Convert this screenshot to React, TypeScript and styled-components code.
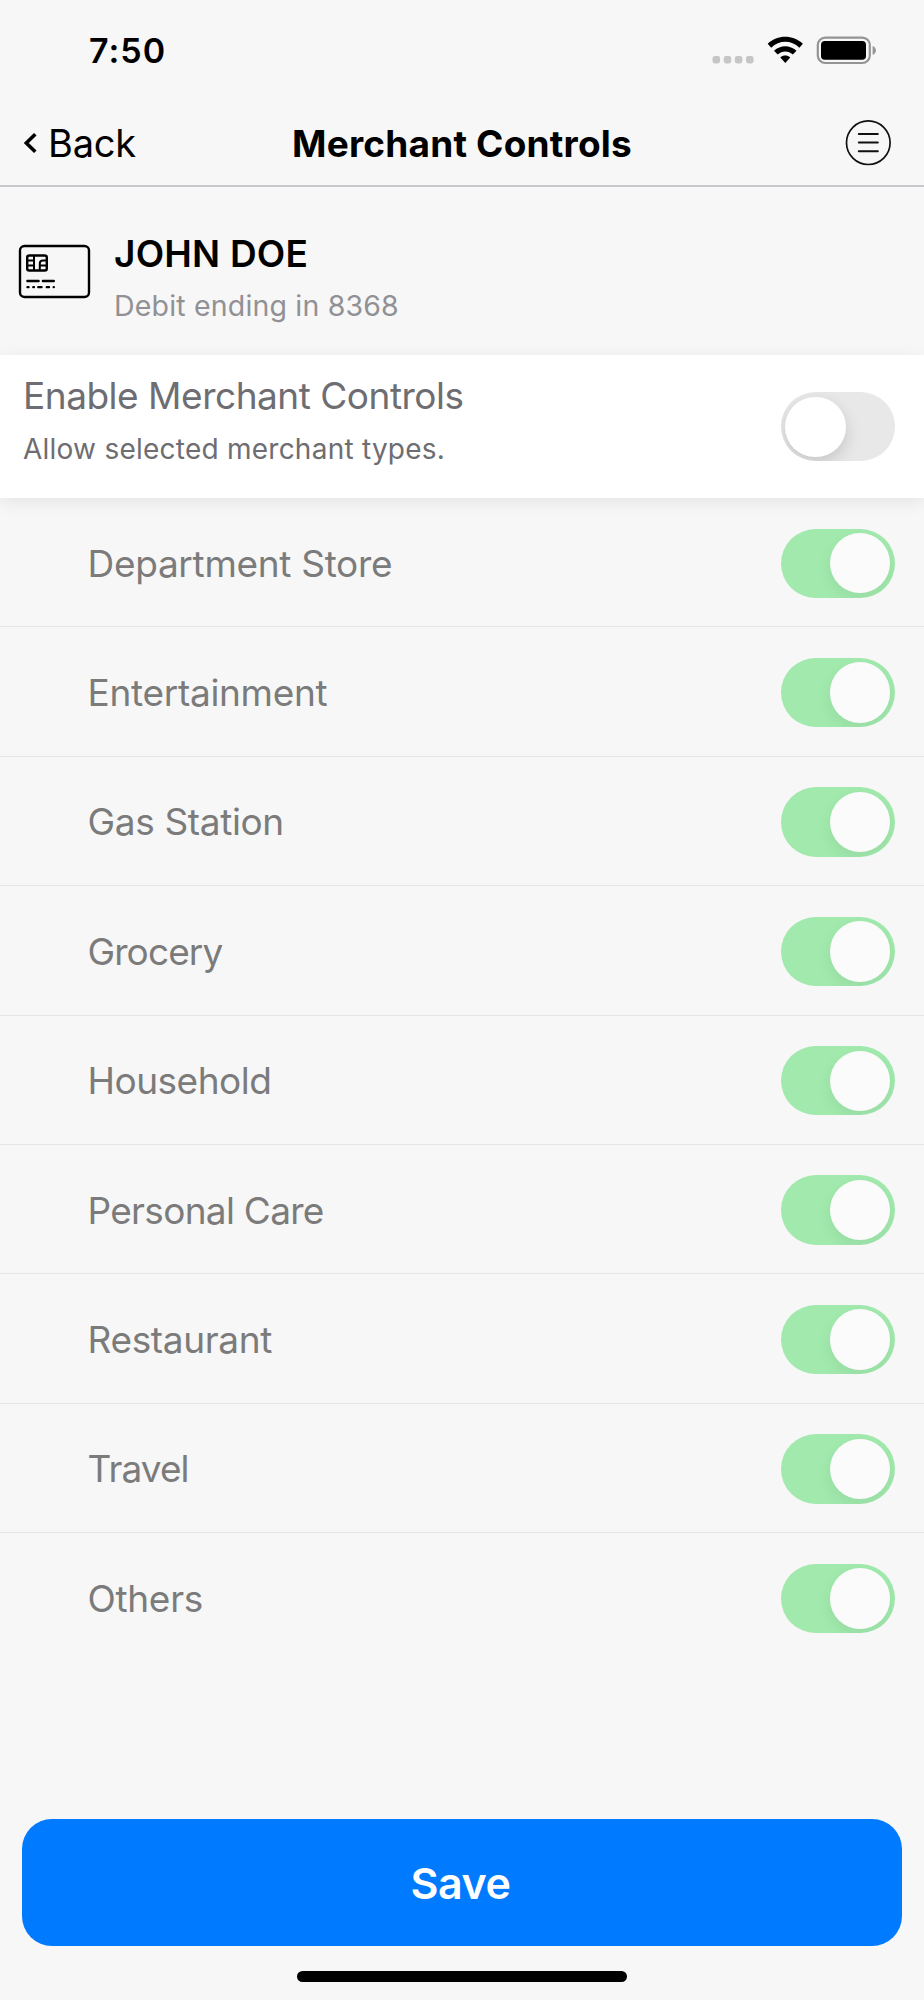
import React from "react";
import styled, { createGlobalStyle } from "styled-components";

const GlobalStyle = createGlobalStyle`
  * { box-sizing: border-box; }
  body { margin: 0; background: #f7f7f7; font-family: Inter, "Liberation Sans", sans-serif; }
  button { font: inherit; border: 0; padding: 0; background: none; color: inherit; }
  h1, h2, p { margin: 0; font-weight: inherit; }
  svg { display: block; flex: none; }
`;

const Screen = styled.div`
  width: 924px;
  height: 2000px;
  display: flex;
  flex-direction: column;
  background: #f7f7f7;
  color: #000;
  overflow: hidden;
`;

const Text = styled.span<{ $size: number; $line: number; $spacing?: number; $weight?: number; $color?: string }>`
  display: block;
  white-space: nowrap;
  font-size: ${(p) => p.$size}px;
  line-height: ${(p) => p.$line}px;
  letter-spacing: ${(p) => p.$spacing ?? 0}px;
  font-weight: ${(p) => p.$weight ?? 400};
  color: ${(p) => p.$color ?? "inherit"};
`;

const StatusBar = styled.div`
  height: 100px;
  flex: none;
  display: flex;
  justify-content: space-between;
  padding: 31px 48px 0 89px;
`;

const StatusIcons = styled.div`
  display: flex;
  padding-top: 5px;
`;

const NavBar = styled.header`
  height: 87px;
  flex: none;
  display: grid;
  grid-template-columns: 1fr auto 1fr;
  padding: 19px 24px 0;
  border-bottom: 2px solid #c9c9cd;
`;

const BackButton = styled.button`
  display: flex;
  align-items: flex-start;
  gap: 11px;
  justify-self: start;
  height: 50px;
`;

const MenuButton = styled.button`
  justify-self: end;
  align-self: start;
  margin-right: 8px;
`;

const Chevron = styled.svg`
  margin-top: 14px;
`;

const Account = styled.section`
  height: 168px;
  flex: none;
  display: flex;
  gap: 22px;
  padding: 46px 0 0 18px;
`;

const CardIcon = styled.svg`
  margin-top: 11px;
`;

const EnablePanel = styled.section`
  position: relative;
  height: 143px;
  flex: none;
  display: flex;
  justify-content: space-between;
  padding: 21px 29px 0 23px;
  background: #fff;
  box-shadow: 0 4px 16px rgba(0, 0, 0, 0.08);
`;

const PanelToggle = styled.div`
  padding-top: 16px;
`;

const List = styled.ul`
  list-style: none;
  margin: 0;
  padding: 0;
  flex: none;
`;

const Row = styled.li`
  height: 129.4px;
  display: flex;
  align-items: center;
  justify-content: space-between;
  padding: 2px 29px 0 87.5px;
  border-bottom: 1px solid #e5e5e5;
  &:last-child { border-bottom-color: transparent; }
`;

const RowLabel = styled(Text)`
  padding-top: 1px;
`;

const Track = styled.button<{ $on: boolean }>`
  display: flex;
  align-items: center;
  justify-content: ${(p) => (p.$on ? "flex-end" : "flex-start")};
  width: 114px;
  height: 69.4px;
  padding: 0 4.6px 0 4.2px;
  border-radius: 35px;
  overflow: hidden;
  background: ${(p) => (p.$on ? "#a1e9ad" : "#e8e8e8")};
`;

const Knob = styled.span<{ $on: boolean }>`
  width: 60.4px;
  height: 60.4px;
  border-radius: 50%;
  background: ${(p) => (p.$on ? "#fbfbfb" : "#fff")};
  box-shadow: 0 6px 16px rgba(0, 0, 0, ${(p) => (p.$on ? 0.06 : 0.15)});
`;

const Footer = styled.footer`
  margin-top: auto;
  height: 181px;
  flex: none;
  display: flex;
  flex-direction: column;
  align-items: center;
  padding: 0 22.4px;
`;

const SaveButton = styled.button`
  width: 100%;
  height: 127px;
  border-radius: 30px;
  background: #007aff;
  color: #fff;
  display: flex;
  justify-content: center;
  padding: 34px 3px 0 0;
`;

const HomeIndicator = styled.div`
  margin-top: 25px;
  width: 330px;
  height: 11px;
  border-radius: 6px;
  background: #000;
`;

function Toggle({ on, label }: { on: boolean; label: string }) {
  return (
    <Track $on={on} role="switch" aria-checked={on} aria-label={label}>
      <Knob $on={on} />
    </Track>
  );
}

function Signals() {
  return (
    <svg width="164" height="30" viewBox="712 36 164 30">
      <g fill="#c6c6c6">
        {[712.5, 723.7, 734.8, 746].map((x) => (
          <rect key={x} x={x} y="56" width="7.6" height="7.4" rx="2.4" />
        ))}
      </g>
      <path d="M767.7 43.7C777.5 34.4 792.8 34.4 802.9 43.7L799.4 47.7C791 39.8 779.5 39.8 771.2 47.7Z" />
      <path d="M774 50.7C780.5 44.6 789.9 44.6 796.5 50.7L792.8 54.5C788.3 50.6 782.2 50.6 777.7 54.5Z" />
      <path d="M780.3 57.5C783.2 54.9 787.3 54.9 790.2 57.5L785.3 63.1Z" />
      <rect x="817.8" y="37.6" width="52" height="25.4" rx="7.5" fill="none" stroke="#949494" strokeWidth="2.2" />
      <rect x="821" y="41" width="45" height="18.7" rx="3.8" />
      <path d="M872.6 46C877 47.5 877 53.3 872.6 54.8Z" fill="#949494" />
    </svg>
  );
}

function PaymentCard() {
  return (
    <CardIcon width="74" height="55" viewBox="18 244 74 55" fill="none" stroke="#000" strokeWidth="2.4">
      <rect x="20" y="246" width="69" height="51" rx="4.5" />
      <rect x="27.2" y="255.5" width="19.6" height="15" rx="2" />
      <path d="M34 255.5V270.5M27 260.4H34M27 265.6H34M39.8 270.5V263.4Q39.8 260.4 43 260.4H47M40 265.6H47" strokeWidth="2" />
      <path d="M27.4 281H38.6M42.9 281H53.8" strokeLinecap="round" />
      <path d="M27.4 287.2H28.6M33.2 287.2H34M38.2 287.2H41.6M46.7 287.2H49.1M53.6 287.2H53.9" strokeLinecap="round" strokeWidth="2.2" />
    </CardIcon>
  );
}

const merchants: { name: string; spacing: number }[] = [
  { name: "Department Store", spacing: -0.3 },
  { name: "Entertainment", spacing: -0.3 },
  { name: "Gas Station", spacing: -0.35 },
  { name: "Grocery", spacing: -0.9 },
  { name: "Household", spacing: -0.5 },
  { name: "Personal Care", spacing: -0.7 },
  { name: "Restaurant", spacing: -0.35 },
  { name: "Travel", spacing: -0.9 },
  { name: "Others", spacing: -0.3 },
];

export default function App() {
  return (
    <Screen>
      <GlobalStyle />
      <StatusBar>
        <Text $size={34} $line={40} $spacing={1} $weight={600}>7:50</Text>
        <StatusIcons><Signals /></StatusIcons>
      </StatusBar>
      <NavBar>
        <BackButton>
          <Chevron width="13" height="20" viewBox="0 0 13 20" fill="none" stroke="#000" strokeWidth="3.5">
            <path d="M11.3 1.2L2.3 10L11.3 18.8" />
          </Chevron>
          <Text $size={38} $line={49} $spacing={-0.2}>Back</Text>
        </BackButton>
        <Text as="h1" $size={37} $line={49} $spacing={0.2} $weight={650}>Merchant Controls</Text>
        <MenuButton aria-label="Menu">
          <svg width="48" height="48" viewBox="0 0 48 48" fill="none" stroke="#111" strokeWidth="1.7">
            <circle cx="24.3" cy="23.7" r="21.8" />
            <path d="M14.8 15H33.8M14.8 23.6H33.8M14.8 32.3H33.8" strokeWidth="2" strokeLinecap="round" />
          </svg>
        </MenuButton>
      </NavBar>
      <Account>
        <PaymentCard />
        <div>
          <Text as="h2" $size={37} $line={42} $spacing={0.2} $weight={600}>JOHN DOE</Text>
          <Text $size={28.5} $line={62} $spacing={0.18} $color="#919195">Debit ending in 8368</Text>
        </div>
      </Account>
      <EnablePanel>
        <div>
          <Text as="h2" $size={37} $line={40} $spacing={-0.48} $color="#6d6d72">Enable Merchant Controls</Text>
          <Text $size={28} $line={66} $spacing={0.24} $color="#6d6d72">Allow selected merchant types.</Text>
        </div>
        <PanelToggle><Toggle on={false} label="Enable Merchant Controls" /></PanelToggle>
      </EnablePanel>
      <List>
        {merchants.map((m) => (
          <Row key={m.name}>
            <RowLabel $size={37} $line={50} $spacing={m.spacing} $color="#7b7b7b">{m.name}</RowLabel>
            <Toggle on label={m.name} />
          </Row>
        ))}
      </List>
      <Footer>
        <SaveButton><Text $size={43} $line={60} $spacing={-0.4} $weight={600}>Save</Text></SaveButton>
        <HomeIndicator />
      </Footer>
    </Screen>
  );
}
